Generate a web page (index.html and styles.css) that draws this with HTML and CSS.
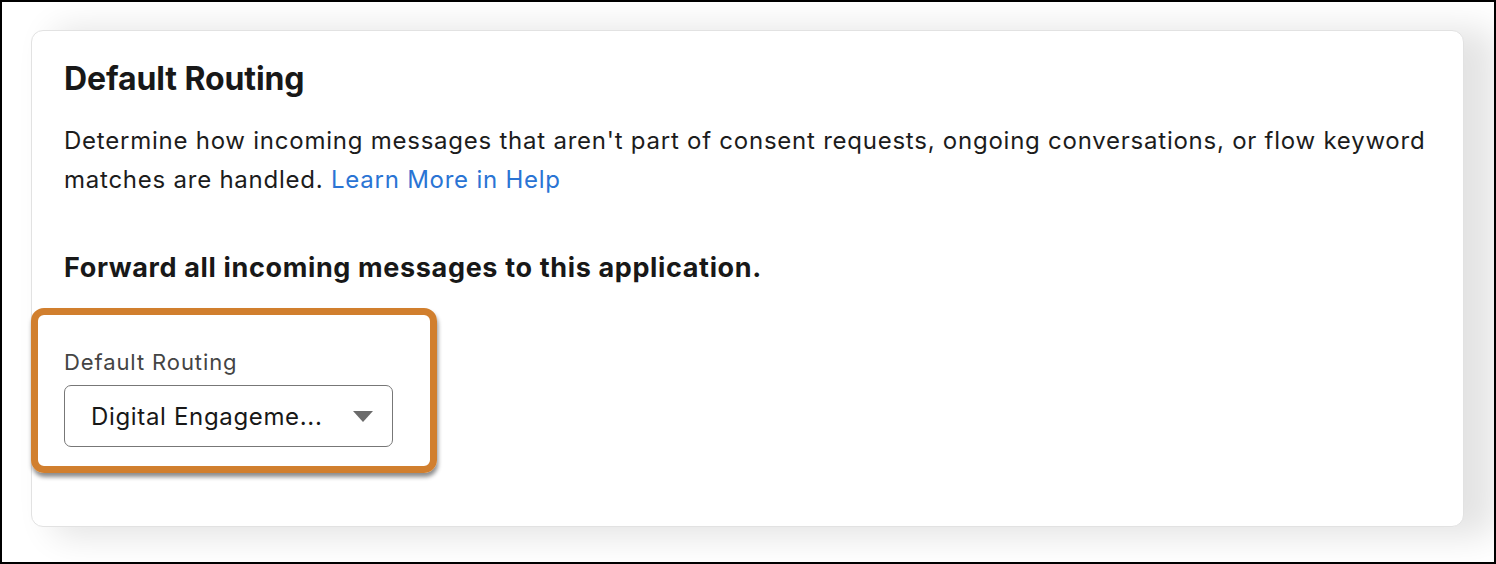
FILE: index.html
```html
<!DOCTYPE html>
<html lang="en">

<head>
	<meta charset="UTF-8">
	<title>Default Routing</title>
	<meta name="viewport" content="width=device-width, initial-scale=1.0">
	<link rel="stylesheet" href="styles.css">
</head>

<body>

	<main class="carte">
		<h2 class="titre">Default Routing</h2>

		<p class="description">
			Determine how incoming messages that aren't part of consent requests, ongoing conversations, or flow keyword
			matches are handled. <a href="#">Learn More in Help</a>
		</p>

		<h3 class="sousTitre">Forward all incoming messages to this application.</h3>

		<!-- Champ mis en évidence -->
		<div class="encadre">
			<label class="etiquette" for="routage">Default Routing</label>
			<div class="liste">
				<span id="routage" class="valeur">Digital Engageme...</span>
				<span class="fleche"></span>
			</div>
		</div>
	</main>

</body>

</html>
```

FILE: styles.css
```css
/*Reset*/

* {
	margin: 0;
	padding: 0;
	box-sizing: border-box;
}

html,
body {
	height: 100%;
}

body {
	font-family: Inter, "Noto Sans", sans-serif;
	color: #181818;
	background-color: #fff;
	border: 2px solid #000;
	padding: 28px 30px 35px 29px;
	overflow: hidden;
}

.carte {
	height: 100%;
	background-color: #fff;
	border: 1px solid #e2e2e2;
	border-radius: 12px;
	padding: 30px 32px 0 32px;
	/*Ombre large décalée vers la droite*/
	box-shadow: 26px 4px 34px 6px rgba(0, 0, 0, 0.11);
}

.titre {
	font-size: 32px;
	font-weight: 700;
	line-height: 36px;
	letter-spacing: -0.1px;
}

.description {
	margin-top: 24px;
	font-size: 24px;
	line-height: 39px;
	letter-spacing: 0.76px;
	color: #1c1c1c;
}

.description a {
	color: #2a74d4;
	text-decoration: none;
}

.sousTitre {
	margin-top: 54px;
	font-size: 27px;
	font-weight: 700;
	line-height: 30px;
	letter-spacing: 0.64px;
}

/*Cadre orange autour du champ*/
.encadre {
	width: 406px;
	margin: 25px 0 0 -33px;
	padding: 33px 26px 19px 26px;
	border: 7px solid #d17f2e;
	border-radius: 13px;
	box-shadow: 1px 4px 4px rgba(0, 0, 0, 0.45);
}

.etiquette {
	display: block;
	font-size: 22px;
	line-height: 28px;
	letter-spacing: 0.9px;
	color: #444;
}

.liste {
	margin-top: 9px;
	width: 329px;
	height: 62px;
	border: 1.5px solid #777;
	border-radius: 7px;
	padding: 0 19px 0 26px;
	display: flex;
	align-items: center;
	justify-content: space-between;
}

.valeur {
	font-size: 24px;
	letter-spacing: 0.66px;
	color: #181818;
}

.fleche {
	width: 0;
	height: 0;
	border-left: 10px solid transparent;
	border-right: 10px solid transparent;
	border-top: 11px solid #6b6b6b;
}
```
